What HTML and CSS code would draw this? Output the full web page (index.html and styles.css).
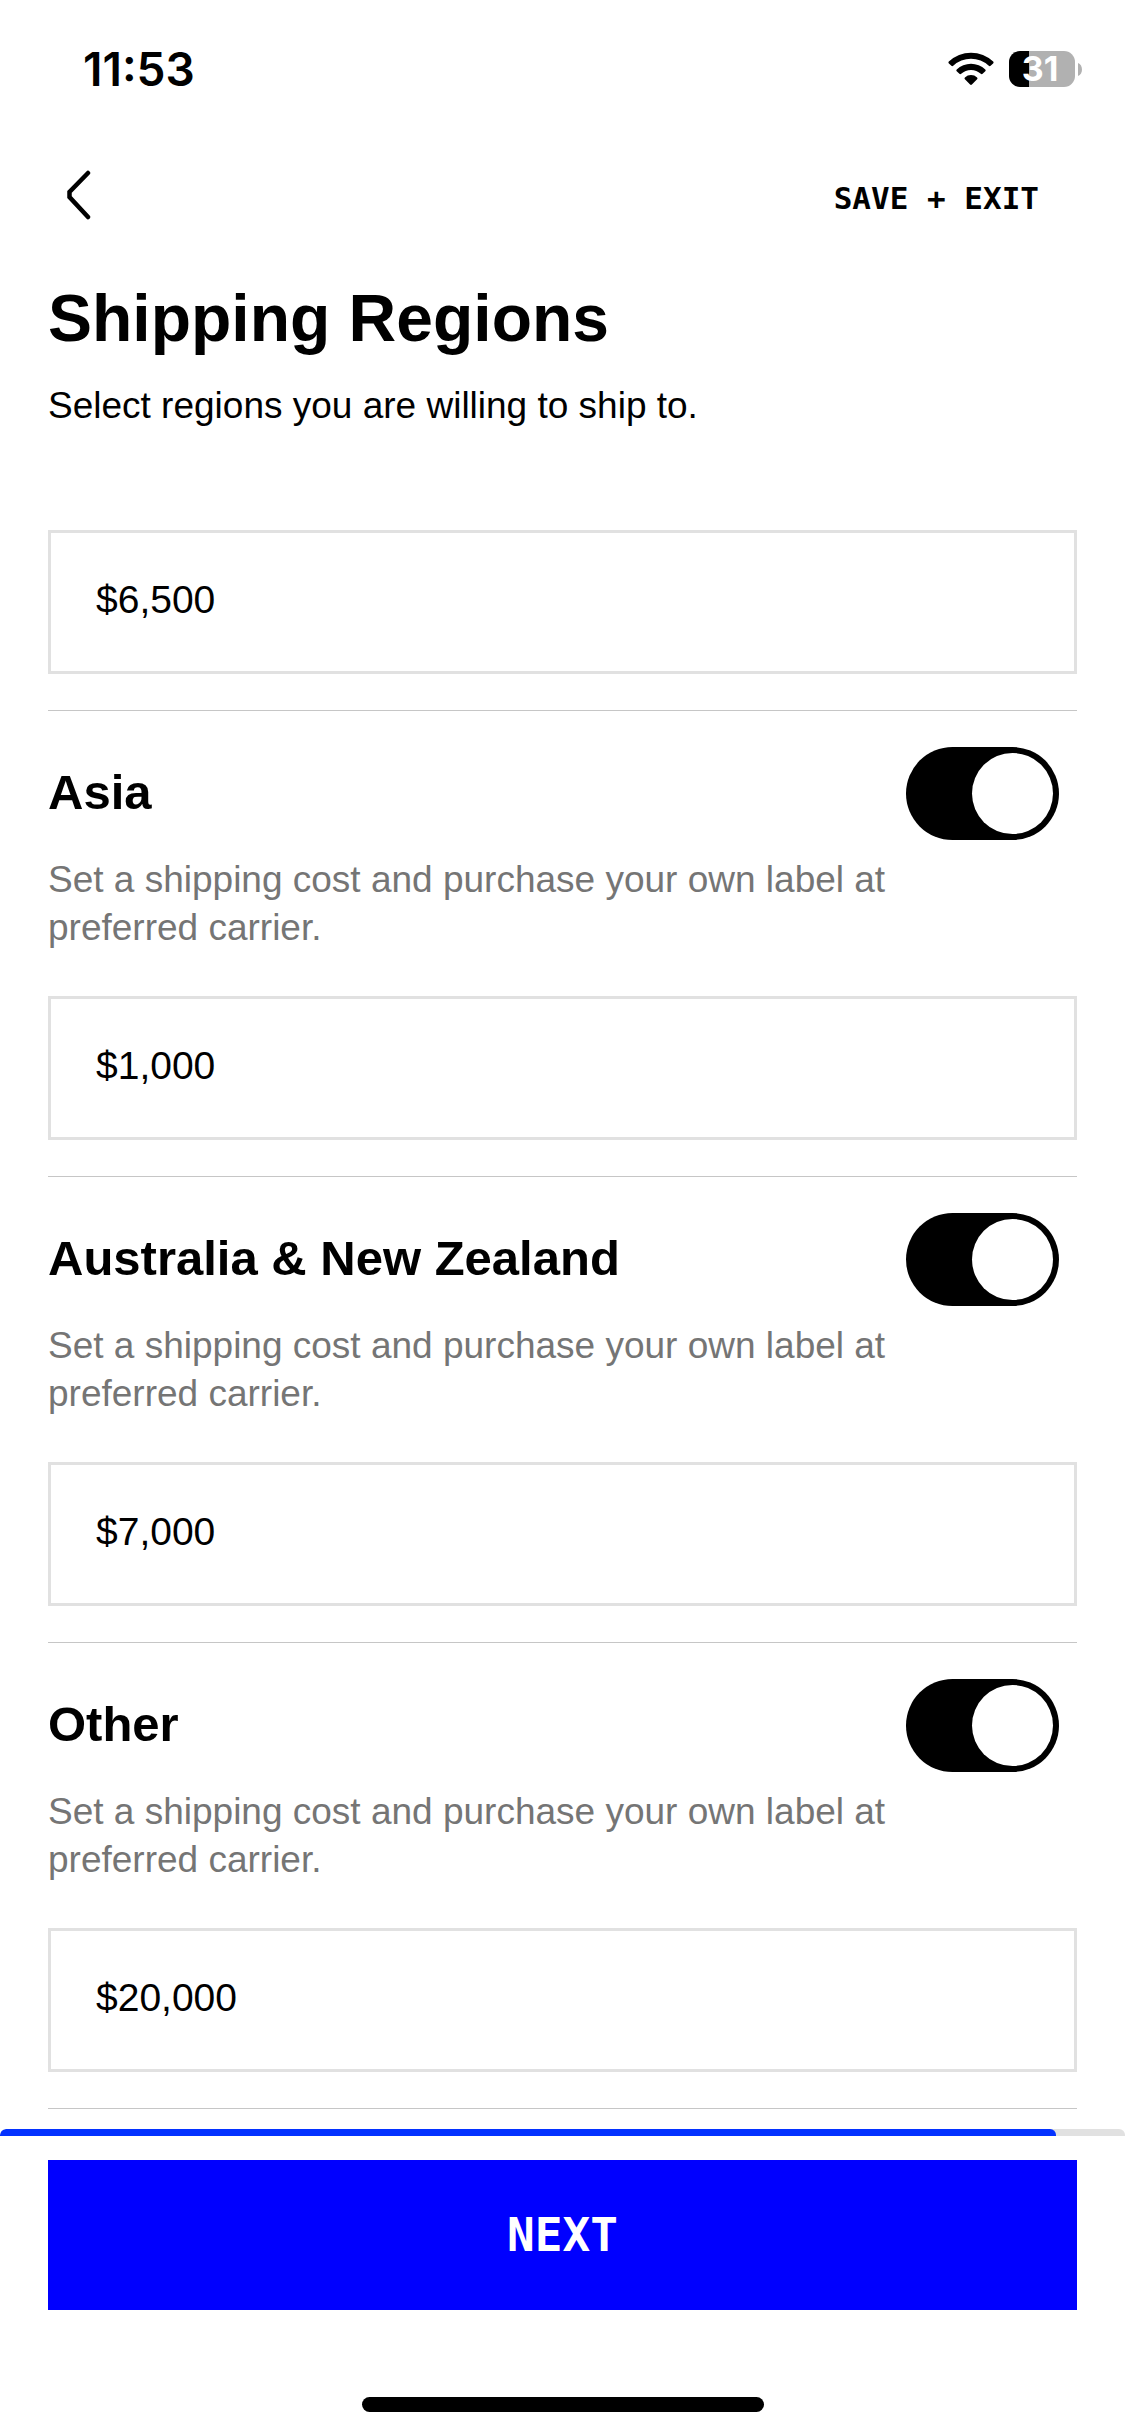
FILE: index.html
```
<!DOCTYPE html>
<html lang="en">
<head>
    <meta charset="UTF-8">
    <meta name="viewport" content="width=device-width, initial-scale=1.0">
    <title>Shipping Regions</title>
    <link rel="stylesheet" href="styles.css">
</head>
<body>
    <div class="status-bar">
        <span class="time">11:53</span>
        <div class="status-icons">
            <svg class="wifi" viewBox="0 0 46 34" aria-hidden="true">
                <path d="M0.8 9.6 Q0 10.5 0.9 11.4 L3.4 13.8 Q4.3 14.6 5.2 13.8 A26 26 0 0 1 40.8 13.8 Q41.7 14.6 42.6 13.8 L45.1 11.4 Q46 10.5 45.2 9.6 A32 32 0 0 0 0.8 9.6 Z" />
                <path d="M8.7 17.4 Q7.8 18.3 8.7 19.2 L11.4 21.8 Q12.3 22.6 13.2 21.8 A14.5 14.5 0 0 1 32.8 21.8 Q33.7 22.6 34.6 21.8 L37.3 19.2 Q38.2 18.3 37.3 17.4 A20.6 20.6 0 0 0 8.7 17.4 Z" />
                <path d="M16.9 25.4 Q16 26.3 16.9 27.2 L22.1 32.6 Q23 33.4 23.9 32.6 L29.1 27.2 Q30 26.3 29.1 25.4 A9 9 0 0 0 16.9 25.4 Z" />
            </svg>
            <div class="battery">
                <span class="battery-level">31</span>
                <svg class="battery-cap" viewBox="0 0 4 13" aria-hidden="true">
                    <path d="M0 0 C5.3 2 5.3 11 0 13 Z" />
                </svg>
            </div>
        </div>
    </div>

    <header class="nav">
        <button class="back" type="button" aria-label="Back">
            <svg viewBox="0 0 24 50" fill="none" stroke="#000" stroke-width="4.5" stroke-linecap="round" aria-hidden="true">
                <path d="M21 3 L2.5 22 V27 L21 47" />
            </svg>
        </button>
        <button class="save" type="button">SAVE + EXIT</button>
    </header>

    <main class="content">
        <div class="intro">
            <h1>Shipping Regions</h1>
            <p>Select regions you are willing to ship to.</p>
        </div>

        <section class="region">
            <input class="price" type="text" value="$6,500" aria-label="Shipping cost">
        </section>

        <section class="region">
            <div class="region-head">
                <label for="asia">Asia</label>
                <input class="toggle" type="checkbox" id="asia" checked>
            </div>
            <p class="region-note">Set a shipping cost and purchase your own label at preferred carrier.</p>
            <input class="price" type="text" value="$1,000" aria-label="Asia shipping cost">
        </section>

        <section class="region">
            <div class="region-head">
                <label for="australia">Australia &amp; New Zealand</label>
                <input class="toggle" type="checkbox" id="australia" checked>
            </div>
            <p class="region-note">Set a shipping cost and purchase your own label at preferred carrier.</p>
            <input class="price" type="text" value="$7,000" aria-label="Australia and New Zealand shipping cost">
        </section>

        <section class="region">
            <div class="region-head">
                <label for="other">Other</label>
                <input class="toggle" type="checkbox" id="other" checked>
            </div>
            <p class="region-note">Set a shipping cost and purchase your own label at preferred carrier.</p>
            <input class="price" type="text" value="$20,000" aria-label="Other shipping cost">
        </section>
    </main>

    <footer class="footer">
        <div class="progress" role="progressbar" aria-label="Listing progress" aria-valuenow="93.9" aria-valuemin="0" aria-valuemax="100">
            <div class="progress-fill" style="width: 93.9%"></div>
        </div>
        <div class="actions">
            <button class="next" type="button">NEXT</button>
        </div>
        <div class="home-indicator"></div>
    </footer>
</body>
</html>
```
FILE: styles.css
```
* {
    box-sizing: border-box;
}

body {
    display: flex;
    flex-direction: column;
    min-height: 100vh;
    margin: 0;
    background-color: #fff;
    color: #000;
    font-family: "Liberation Sans", Arial, sans-serif;
}

h1,
p {
    margin: 0;
}

button {
    padding: 0;
    border: 0;
    background: none;
    color: inherit;
    font-family: "DejaVu Sans Mono", monospace;
    font-weight: bold;
    cursor: pointer;
}

/* Status bar */
.status-bar {
    display: flex;
    align-items: center;
    justify-content: space-between;
    height: 138px;
    padding: 0 43px 0 83px;
    font-family: Inter, sans-serif;
}

.time {
    font-size: 46px;
    font-weight: 600;
}

.status-icons {
    display: flex;
    align-items: center;
    gap: 15px;
}

.wifi {
    width: 46px;
    height: 34px;
}

.battery {
    display: flex;
    align-items: center;
    gap: 3px;
}

.battery-level {
    width: 66px;
    padding-right: 4px;
    border-radius: 11px;
    background: linear-gradient(to right, #000 31%, #b1b1b1 31%);
    color: #fff;
    font-size: 34px;
    font-weight: 700;
    line-height: 36px;
    text-align: center;
}

.battery-cap {
    width: 4px;
    height: 13px;
    fill: #b1b1b1;
}

/* Navigation */
.nav {
    display: flex;
    align-items: center;
    justify-content: space-between;
    height: 120px;
    padding: 0 86px 6px 67px;
}

.back svg {
    display: block;
    width: 24px;
    height: 50px;
}

.save {
    padding-top: 6px;
    font-size: 31px;
}

/* Regions list */
.content {
    flex: 1;
    padding: 20px 48px;
}

.intro {
    display: flex;
    flex-direction: column;
    gap: 24px;
    margin-bottom: 100px;
    font-size: 37px;
    line-height: 48px;
}

.intro h1 {
    font-size: 66px;
    line-height: 80px;
}

.region {
    margin-bottom: 36px;
    padding-bottom: 36px;
    border-bottom: 1px solid #c6c6c6;
}

.region:last-child {
    margin-bottom: 0;
}

.region-head {
    display: flex;
    align-items: center;
    justify-content: space-between;
    padding-right: 18px;
    font-size: 49px;
    font-weight: bold;
    line-height: 60px;
}

.region-head label {
    padding-bottom: 4px;
}

.region-note {
    margin: 16px 0 44px;
    padding-right: 120px;
    color: #757575;
    font-size: 37px;
    line-height: 48px;
}

.price {
    display: block;
    width: 100%;
    height: 144px;
    padding: 0 45px 4px;
    border: 3px solid #e1e1e1;
    border-radius: 0;
    background: #fff;
    color: #000;
    font-family: inherit;
    font-size: 39px;
}

.toggle {
    display: flex;
    align-items: center;
    flex-shrink: 0;
    width: 153px;
    height: 93px;
    margin: 0;
    padding: 6px;
    border-radius: 47px;
    background: #b1b1b1;
    appearance: none;
    cursor: pointer;
}

.toggle::before {
    content: "";
    width: 81px;
    height: 81px;
    border-radius: 50%;
    background: #fff;
}

.toggle:checked {
    justify-content: flex-end;
    background: #000;
}

/* Footer */
.progress {
    height: 7px;
    border-radius: 6px 6px 0 0;
    background: #e1e1e1;
    overflow: hidden;
}

.progress-fill {
    height: 100%;
    border-radius: 6px 6px 0 0;
    background: #0432ff;
}

.actions {
    padding: 24px 48px 87px;
}

.next {
    display: block;
    width: 100%;
    height: 150px;
    background: #00f;
    color: #fff;
    font-size: 46px;
}

.home-indicator {
    width: 402px;
    max-width: 50%;
    height: 15px;
    margin: 0 auto 24px;
    border-radius: 8px;
    background: #000;
}
```
